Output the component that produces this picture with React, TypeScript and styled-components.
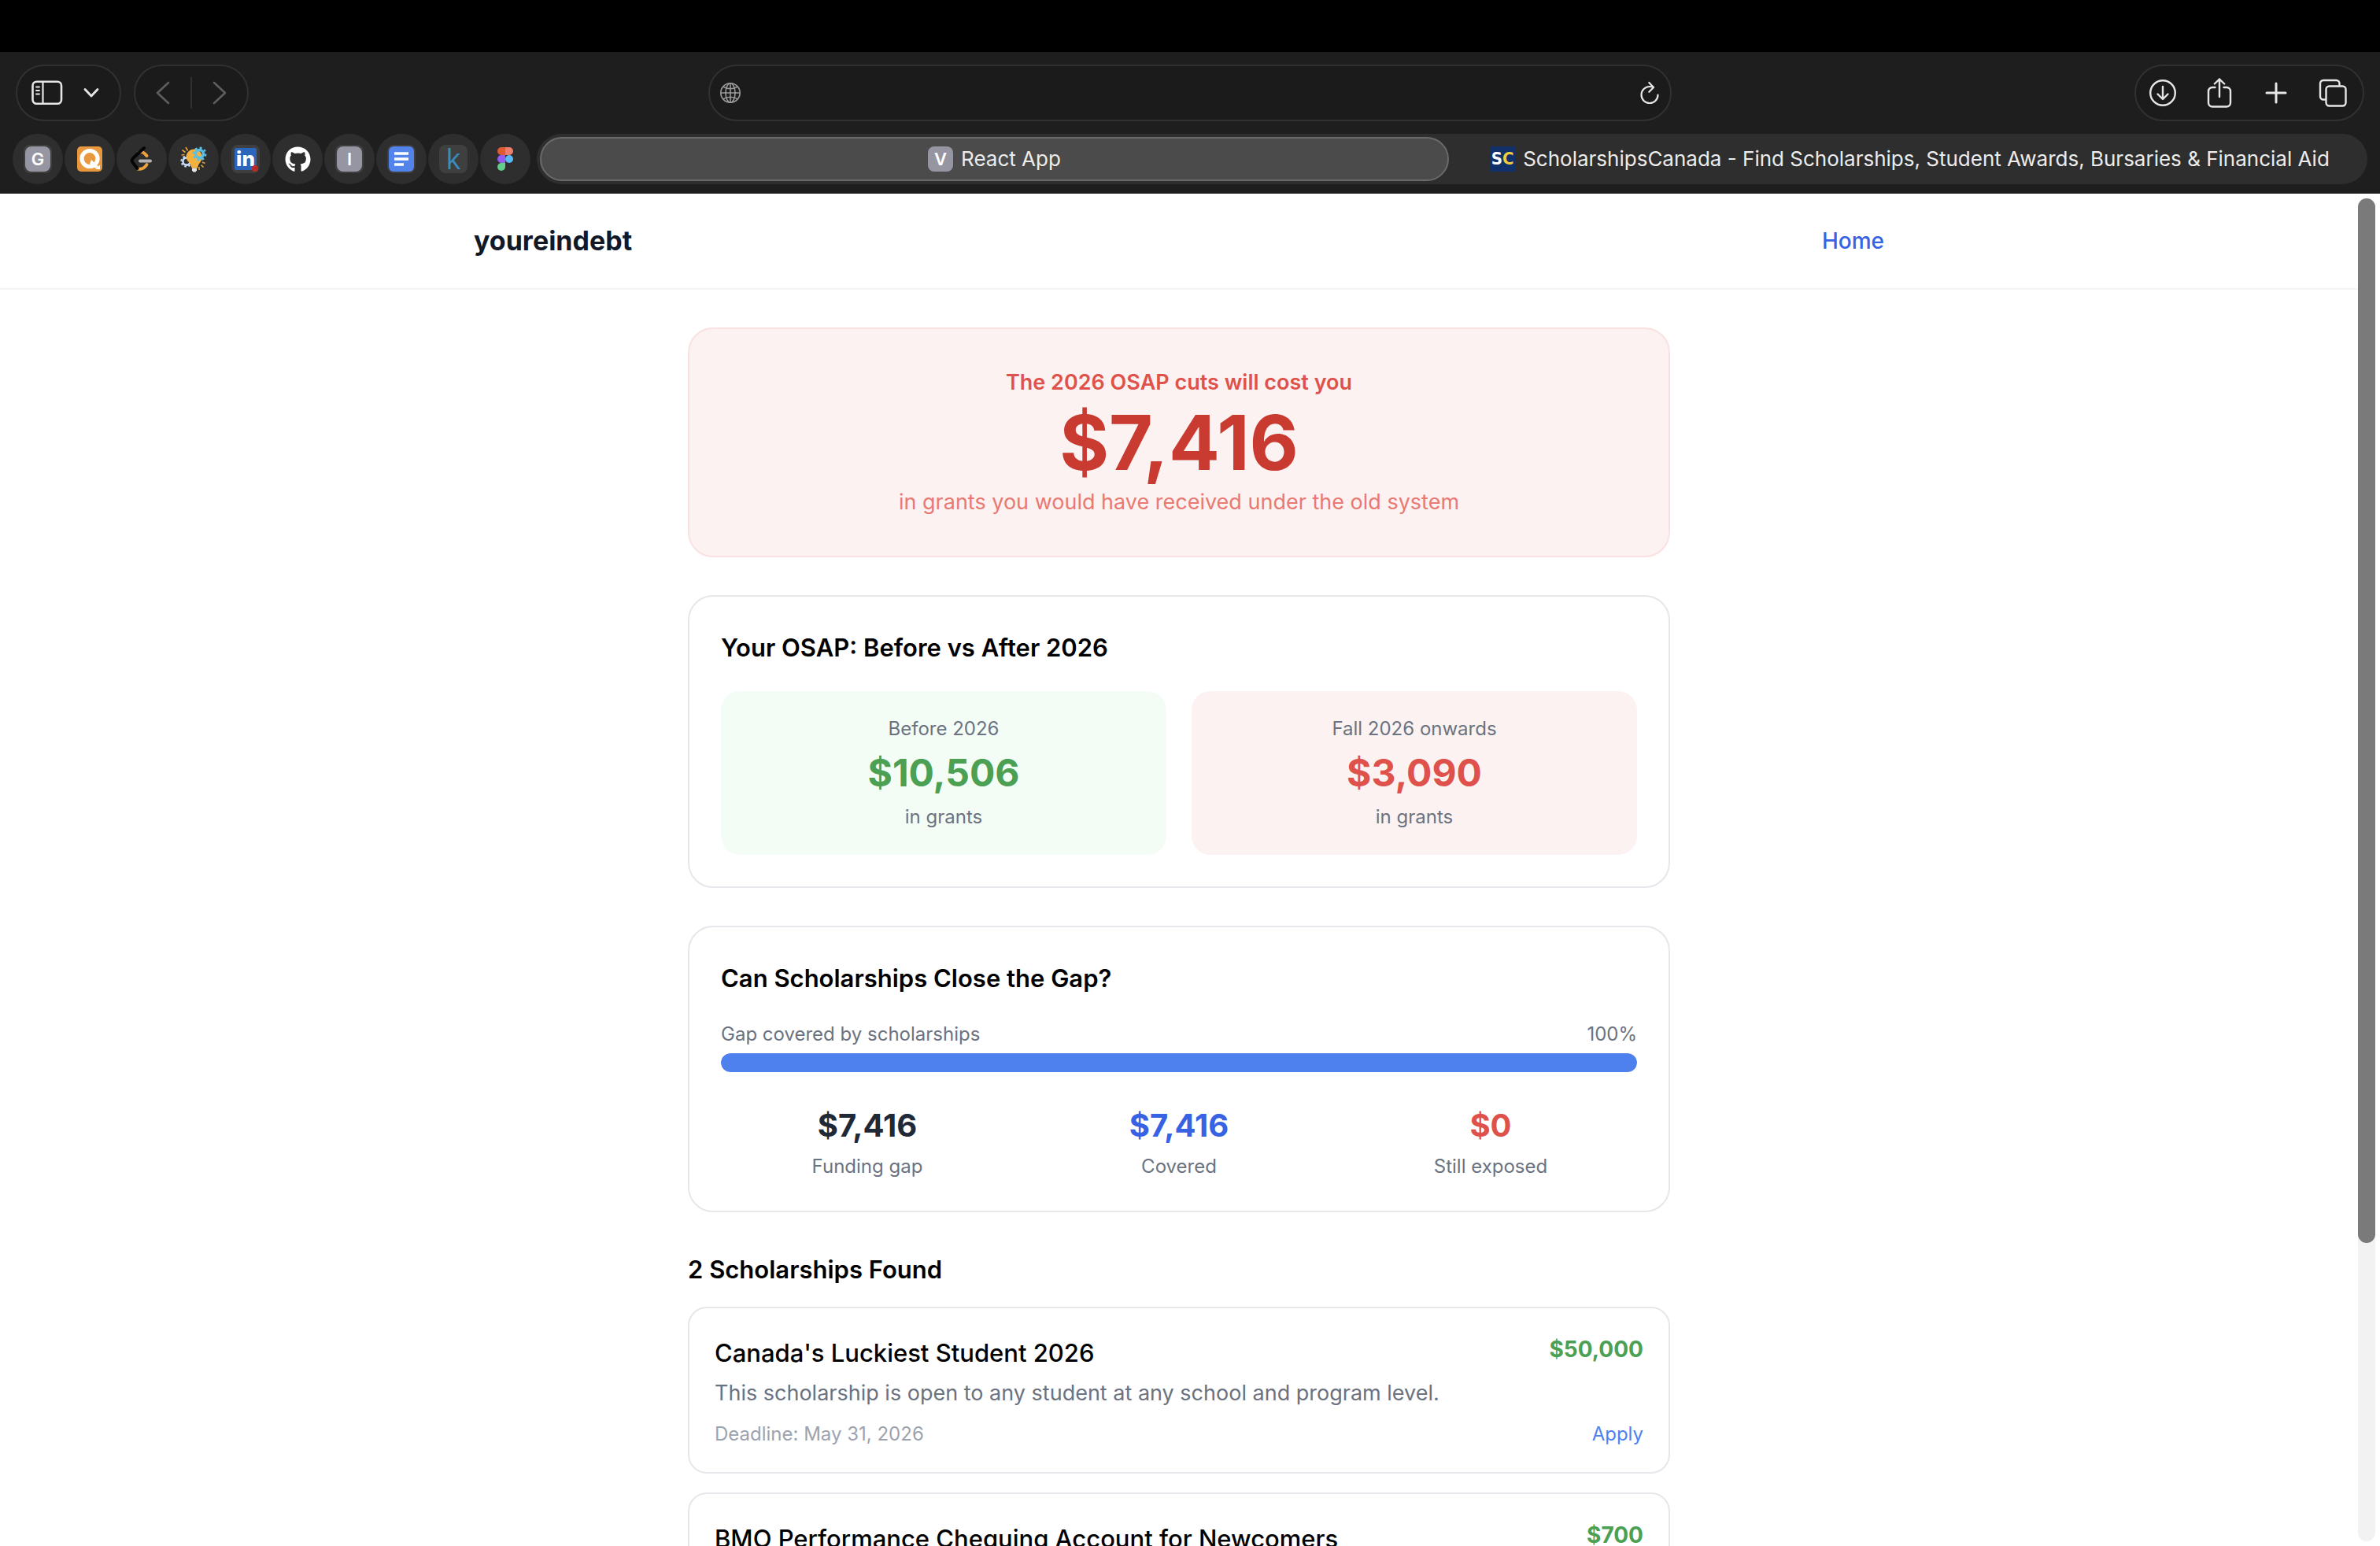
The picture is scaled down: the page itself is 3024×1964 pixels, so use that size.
import React from "react";
import styled, { createGlobalStyle } from "styled-components";
import { FaGithub } from "react-icons/fa";

const GlobalStyle = createGlobalStyle`
  *, *::before, *::after { box-sizing: border-box; }
  body {
    margin: 0;
    font-family: Inter, "Liberation Sans", sans-serif;
    color: #000;
    background: #fff;
  }
  h1, h2, h3, p, dl, dd, dt, ul { margin: 0; padding: 0; }
  button { font: inherit; color: inherit; border: 0; background: none; padding: 0; }
  a { text-decoration: none; }
`;

const color = {
  ink: "#111827",
  slate: "#1f2937",
  gray: "#6b7280",
  mute: "#9ca3af",
  line: "#e5e7eb",
  blue: "#3662e3",
  sky: "#4f81ee",
  green: "#4ba054",
  red: "#df524c",
  deepRed: "#c93a31",
  softRed: "#e87973",
  redTint: "#fcf2f1",
  redLine: "#fae1e1",
  greenTint: "#f3fdf6",
};

/* ---------- browser window ---------- */

const Window = styled.div`
  display: flex;
  flex-direction: column;
  height: 100vh;
  overflow: hidden;
`;

const MenuStrip = styled.div`
  flex: none;
  height: 66px;
  background: #000;
`;

const Chrome = styled.header`
  flex: none;
  display: flex;
  flex-direction: column;
  gap: 16px;
  padding: 16px 16px 12px;
  background: #1e1e1e;
  color: #e6e6e6;
`;

const Toolbar = styled.div`
  display: grid;
  grid-template-columns: 1fr minmax(0, 1224px) 1fr;
  align-items: center;
  padding: 0 4px;
`;

const ToolGroup = styled.div<{ $end?: boolean }>`
  display: flex;
  gap: 16px;
  justify-content: ${(p) => (p.$end ? "flex-end" : "flex-start")};
`;

const Pill = styled.div<{ $width?: number; $pad?: number }>`
  display: flex;
  align-items: center;
  justify-content: space-between;
  height: 72px;
  ${(p) => (p.$width ? `width: ${p.$width}px;` : "")}
  padding: 0 ${(p) => p.$pad ?? 16}px;
  border: 2px solid #313131;
  border-radius: 36px;
  background: #1b1b1b;
`;

const ActionPill = styled(Pill)`
  justify-content: flex-start;
  gap: 36px;
`;

const IconButton = styled.button<{ $width?: number; $dim?: boolean }>`
  display: flex;
  align-items: center;
  justify-content: center;
  width: ${(p) => p.$width ?? 36}px;
  height: 44px;
  color: ${(p) => (p.$dim ? "#5e5e5e" : "#e6e6e6")};
`;

const PillDivider = styled.span`
  width: 2px;
  height: 40px;
  background: #303030;
`;

const Address = styled.input`
  flex: 1;
  min-width: 0;
  height: 44px;
  padding: 0 16px;
  border: 0;
  outline: 0;
  background: transparent;
  color: inherit;
  font: inherit;
  font-size: 26px;
`;

const TabRow = styled.nav`
  display: flex;
  gap: 8px;
`;

const PinnedTabs = styled.div`
  display: flex;
  gap: 2px;
`;

const PinnedTab = styled.button`
  display: flex;
  align-items: center;
  justify-content: center;
  width: 64px;
  height: 64px;
  border-radius: 32px;
  background: #2e2e2e;
`;

const TabStrip = styled.div`
  flex: 1;
  display: grid;
  grid-template-columns: 1fr 1fr;
  gap: 8px;
  padding: 4px;
  border-radius: 32px;
  background: #2e2e2e;
`;

const Tab = styled.button<{ $active?: boolean }>`
  display: flex;
  align-items: center;
  justify-content: center;
  gap: 10px;
  height: 56px;
  border: 2px solid ${(p) => (p.$active ? "#6a6a6a" : "transparent")};
  border-radius: 28px;
  background: ${(p) => (p.$active ? "#4b4b4b" : "transparent")};
  color: #ececec;
  font-size: 26px;
  line-height: 32px;
  white-space: nowrap;
`;

const Plate = styled.span<{ $plain?: boolean }>`
  display: flex;
  align-items: center;
  justify-content: center;
  width: 36px;
  height: 36px;
  border-radius: 8px;
  background: ${(p) => (p.$plain ? "transparent" : "#3f3f3f")};
`;

const Letter = styled.span`
  display: flex;
  align-items: center;
  justify-content: center;
  width: 32px;
  height: 32px;
  border-radius: 8px;
  background: #9696a2;
  color: #fff;
  font-size: 22px;
  font-weight: 600;
  line-height: 32px;
`;

const LinkedInMark = styled.span`
  position: relative;
  display: flex;
  align-items: center;
  justify-content: center;
  width: 28px;
  height: 28px;
  border-radius: 2px;
  background: #2b66bd;
  color: #fff;
  font-size: 26px;
  font-weight: 800;
  line-height: 28px;

  &::after {
    content: "";
    position: absolute;
    right: -2px;
    bottom: -2px;
    width: 8px;
    height: 8px;
    border-radius: 4px;
    background: #bd2a25;
  }
`;

const KaggleMark = styled.span`
  color: #3a8bbf;
  font-family: "Open Sans", sans-serif;
  font-size: 36px;
  line-height: 36px;
`;

const CrestMark = styled.span`
  display: flex;
  align-items: center;
  justify-content: center;
  width: 32px;
  height: 32px;
  background: #12306a;
  color: #fff;
  font-family: "DejaVu Sans Condensed", "Liberation Sans Narrow", "Liberation Sans", sans-serif;
  font-size: 22px;
  font-weight: 700;
  line-height: 32px;

  b {
    color: #f2cc36;
    font-weight: inherit;
  }
`;

/* ---------- page ---------- */

const Viewport = styled.div`
  flex: 1;
  min-height: 0;
  display: flex;
`;

const Page = styled.div`
  flex: 1;
  min-width: 0;
  overflow: hidden;
`;

const ScrollGutter = styled.div`
  flex: none;
  display: flex;
  width: 28px;
  padding: 6px 6px 6px 0;
`;

const ScrollTrack = styled.div`
  flex: 1;
  display: grid;
  grid-template-rows: 7fr 2fr;
  border-radius: 11px;
  background: #f2f2f2;
`;

const ScrollThumb = styled.div`
  border-radius: 11px;
  background: #7a7a7a;
`;

const SiteHeader = styled.div`
  border-bottom: 2px solid #f3f4f6;
`;

const SiteBar = styled.div`
  display: flex;
  align-items: center;
  justify-content: space-between;
  max-width: 1792px;
  margin: 0 auto;
  padding: 36px 0;
`;

const Brand = styled.span`
  color: ${color.ink};
  font-size: 34px;
  font-weight: 700;
  line-height: 48px;
`;

const HomeLink = styled.a`
  color: ${color.blue};
  font-size: 28px;
  font-weight: 500;
  line-height: 40px;
`;

const Main = styled.main`
  display: flex;
  flex-direction: column;
  gap: 48px;
  max-width: 1248px;
  margin: 0 auto;
  padding: 48px 0;
`;

const Hero = styled.section`
  padding: 48px;
  border: 2px solid ${color.redLine};
  border-radius: 32px;
  background: ${color.redTint};
  text-align: center;
`;

const HeroLead = styled.p`
  color: ${color.red};
  font-size: 27px;
  font-weight: 600;
  line-height: 40px;
`;

const HeroFigure = styled.p`
  padding: 8px 0;
  color: ${color.deepRed};
  font-size: 96px;
  font-weight: 700;
  line-height: 96px;
`;

const HeroNote = styled.p`
  color: ${color.softRed};
  font-size: 27px;
  line-height: 40px;
`;

const Card = styled.section`
  padding: 40px;
  border: 2px solid ${color.line};
  border-radius: 32px;
  background: #fff;
`;

const Heading = styled.h2`
  font-size: 31px;
  font-weight: 600;
  line-height: 50px;
`;

const Panels = styled.div`
  display: grid;
  grid-template-columns: 1fr 1fr;
  gap: 32px;
  margin-top: 30px;
`;

const Panel = styled.div<{ $tint: string }>`
  padding: 32px;
  border-radius: 24px;
  background: ${(p) => p.$tint};
  text-align: center;
`;

const Caption = styled.p`
  color: ${color.gray};
  font-size: 24px;
  line-height: 32px;
`;

const PanelFigure = styled.p<{ $color: string }>`
  padding: 8px 0;
  color: ${(p) => p.$color};
  font-size: 48px;
  font-weight: 700;
  line-height: 64px;
`;

const MeterLabels = styled.div`
  display: flex;
  justify-content: space-between;
  margin-top: 30px;
`;

const Meter = styled.div`
  height: 24px;
  margin-top: 8px;
  border-radius: 12px;
  background: ${color.line};
  overflow: hidden;
`;

const MeterFill = styled.div`
  height: 100%;
  border-radius: 12px;
  background: ${color.sky};
`;

const Stats = styled.div`
  display: grid;
  grid-template-columns: repeat(3, 1fr);
  gap: 24px;
  margin-top: 40px;
  text-align: center;
`;

const StatFigure = styled.p<{ $color: string }>`
  margin-bottom: 8px;
  color: ${(p) => p.$color};
  font-size: 40px;
  font-weight: 700;
  line-height: 56px;
`;

const Listing = styled.section`
  display: flex;
  flex-direction: column;
  gap: 22px;
`;

const Awards = styled.div`
  display: flex;
  flex-direction: column;
  gap: 24px;
`;

const Award = styled.article`
  padding: 32px;
  border: 2px solid ${color.line};
  border-radius: 24px;
  background: #fff;
`;

const Row = styled.div<{ $gap?: number }>`
  display: flex;
  align-items: flex-start;
  justify-content: space-between;
  margin-top: ${(p) => p.$gap ?? 0}px;
`;

const AwardTitle = styled.h3`
  font-size: 31px;
  font-weight: 500;
  line-height: 50px;
`;

const Amount = styled.span`
  color: ${color.green};
  font-size: 28px;
  font-weight: 700;
  line-height: 40px;
`;

const Summary = styled.p`
  margin-top: 6px;
  color: ${color.gray};
  font-size: 27px;
  line-height: 40px;
`;

const Deadline = styled.span`
  color: ${color.mute};
  font-size: 24px;
  line-height: 32px;
`;

const ApplyLink = styled.a`
  color: ${color.sky};
  font-size: 24px;
  line-height: 32px;
`;

/* ---------- drawings ---------- */

const stroke = {
  fill: "none",
  stroke: "currentColor",
  strokeLinecap: "round" as const,
  strokeLinejoin: "round" as const,
};

const SidebarIcon = () => (
  <svg width="40" height="32" viewBox="0 0 40 32" {...stroke} strokeWidth="2.6">
    <rect x="1.5" y="1.8" width="36.5" height="28" rx="5" />
    <path d="M14.5 2v28" strokeWidth="2.2" />
    <path d="M6 8.5h4M6 13h4M6 17.5h4" strokeWidth="1.8" />
  </svg>
);

const ChevronDown = () => (
  <svg width="20" height="14" viewBox="0 0 20 14" {...stroke} strokeWidth="2.8">
    <path d="M2 2.5l8 8.5 8-8.5" />
  </svg>
);

const ChevronSide = ({ right }: { right?: boolean }) => (
  <svg width="18" height="30" viewBox="0 0 18 30" {...stroke} strokeWidth="2.6">
    <path d={right ? "M2 2l14 13L2 28" : "M16 2L2 15l14 13"} />
  </svg>
);

const GlobeIcon = () => (
  <svg width="28" height="28" viewBox="0 0 28 28" fill="none" stroke="#9a9a9a" strokeWidth="1.6">
    <circle cx="14" cy="14" r="12.2" />
    <ellipse cx="14" cy="14" rx="6" ry="12.2" />
    <path d="M14 1.8v24.4M1.8 14h24.4M4.8 6.2c5 3.4 13.4 3.4 18.4 0M4.8 21.8c5-3.4 13.4-3.4 18.4 0" />
  </svg>
);

const ReloadIcon = () => (
  <svg width="26" height="30" viewBox="0 0 26 30" {...stroke} strokeWidth="2.2">
    <path d="M23.5 17.5a10.500 10.500 0 1 1-10.500-10.500c2 0 3.600.3 4.800.8" />
    <path d="M12.300 2l5.700 6-5.700 5.800" />
  </svg>
);

const DownloadIcon = () => (
  <svg width="36" height="36" viewBox="0 0 36 36" {...stroke} strokeWidth="2.4">
    <circle cx="18" cy="18" r="15.8" />
    <path d="M18 10v15.500M11.500 19.500l6.500 6.500 6.500-6.500" />
  </svg>
);

const ShareIcon = () => (
  <svg width="32" height="40" viewBox="0 0 32 40" {...stroke} strokeWidth="2.4">
    <path d="M10.500 13H7a5 5 0 0 0-5 5v14.500a5 5 0 0 0 5 5h18a5 5 0 0 0 5-5V18a5 5 0 0 0-5-5h-3.500" />
    <path d="M16 25V2.500M9.800 8.500L16 2.500l6.200 6" />
  </svg>
);

const PlusIcon = () => (
  <svg width="28" height="28" viewBox="0 0 28 28" {...stroke} strokeWidth="3">
    <path d="M14 2v24M2 14h24" />
  </svg>
);

const TabsIcon = () => (
  <svg width="36" height="36" viewBox="0 0 36 36" {...stroke} strokeWidth="2.4">
    <rect x="9.5" y="9.5" width="25" height="25" rx="4" />
    <path d="M8.500 26.500H6a4 4 0 0 1-4-4V6a4 4 0 0 1 4-4h16.500a4 4 0 0 1 4 4v2" />
  </svg>
);

const QIcon = () => (
  <svg width="32" height="32" viewBox="0 0 32 32">
    <rect width="32" height="32" rx="5" fill="#e9983e" />
    <circle cx="16" cy="15.5" r="10" fill="none" stroke="#fff" strokeWidth="5.2" />
    <path d="M18 17l9 8.500-3 2.500-8-6z" fill="#fff" />
    <path d="M29 23.500v5.500h-5.500z" fill="#fff" />
  </svg>
);

const BracketIcon = () => (
  <svg width="32" height="34" viewBox="0 0 32 34" fill="none" strokeLinecap="round" strokeWidth="4">
    <path d="M12.500 8.500c4-1.500 6.500 0 10 4.500" stroke="#eda23c" />
    <path d="M22.500 24c-3.500 5.500-7.500 6.500-11.500 5.500" stroke="#eda23c" />
    <path d="M19 3L5.500 15.500c-2.500 2.500-2.500 4.500 0 7l5 6.500" stroke="#060606" />
    <path d="M14 19.500h13" stroke="#b5b3b1" />
  </svg>
);

const BulbIcon = () => (
  <svg width="34" height="34" viewBox="0 0 34 34" fill="none">
    <circle cx="8" cy="20" r="4.6" stroke="#c9dcfa" strokeWidth="2.6" />
    <circle cx="8" cy="20" r="6.6" stroke="#c9dcfa" strokeWidth="2" strokeDasharray="2.6 2.6" />
    <path d="M17.500 4.500c6 0 10.500 4.500 10.500 10 0 4.500-3.500 7-5 10.500l-1 3.500h-7.500l-1-3.500c-1.500-4-6-6-6-10.500 0-5.500 4.500-10 10-10z" fill="#f3b23f" />
    <path d="M15 28.500h6v3l-1.500 2h-3l-1.500-2z" fill="#e4e4e4" />
    <circle cx="24.5" cy="10.5" r="5" stroke="#58bfe6" strokeWidth="3.4" />
    <circle cx="24.5" cy="10.5" r="7.8" stroke="#58bfe6" strokeWidth="2.4" strokeDasharray="3 3.1" />
    <path d="M7 2l2.500 4.500M2.500 5.500l4 3M1.500 12l4-.5M28 21l3.500 1.500M26.500 24.500l3 3M24 27v4" stroke="#e2a23f" strokeWidth="1.6" />
  </svg>
);

const DocsIcon = () => (
  <svg width="32" height="32" viewBox="0 0 32 32">
    <rect width="32" height="32" rx="6" fill="#5384ec" />
    <path d="M7 9h18M7 16h18M7 23h12" stroke="#fff" strokeWidth="3.4" />
  </svg>
);

const FigmaIcon = () => (
  <svg width="20" height="30" viewBox="0 0 20 30">
    <path d="M5 0h5v10H5A5 5 0 0 1 5 0z" fill="#e05a33" />
    <path d="M10 0h5a5 5 0 0 1 0 10h-5z" fill="#ee7e6c" />
    <path d="M5 10h5v10H5a5 5 0 0 1 0-10z" fill="#975cf6" />
    <circle cx="15" cy="15" r="5" fill="#5bb9f8" />
    <path d="M5 20h5v5a5 5 0 1 1-5-5z" fill="#63cd8a" />
  </svg>
);

/* ---------- data ---------- */

const pinned: { name: string; icon: React.ReactNode; plain?: boolean }[] = [
  { name: "G", icon: <Letter>G</Letter> },
  { name: "Q", icon: <QIcon />, plain: true },
  { name: "LeetCode", icon: <BracketIcon />, plain: true },
  { name: "Ideas", icon: <BulbIcon />, plain: true },
  { name: "LinkedIn", icon: <LinkedInMark>in</LinkedInMark> },
  { name: "GitHub", icon: <FaGithub size={33} color="#fff" />, plain: true },
  { name: "I", icon: <Letter>I</Letter> },
  { name: "Docs", icon: <DocsIcon /> },
  { name: "Kaggle", icon: <KaggleMark>k</KaggleMark> },
  { name: "Figma", icon: <FigmaIcon />, plain: true },
];

const stats = [
  { value: "$7,416", label: "Funding gap", tone: color.slate },
  { value: "$7,416", label: "Covered", tone: color.blue },
  { value: "$0", label: "Still exposed", tone: color.red },
];

const awards = [
  {
    title: "Canada's Luckiest Student 2026",
    amount: "$50,000",
    summary: "This scholarship is open to any student at any school and program level.",
    deadline: "Deadline: May 31, 2026",
  },
  { title: "BMO Performance Chequing Account for Newcomers", amount: "$700" },
];

const covered = 100;

export default function App() {
  return (
    <Window>
      <GlobalStyle />
      <MenuStrip />
      <Chrome>
        <Toolbar>
          <ToolGroup>
            <Pill $width={134} $pad={18}>
              <IconButton $width={40} aria-label="Sidebar"><SidebarIcon /></IconButton>
              <IconButton $width={36} aria-label="Tab groups"><ChevronDown /></IconButton>
            </Pill>
            <Pill $width={146} $pad={8}>
              <IconButton $width={54} $dim aria-label="Back"><ChevronSide /></IconButton>
              <PillDivider />
              <IconButton $width={54} $dim aria-label="Forward"><ChevronSide right /></IconButton>
            </Pill>
          </ToolGroup>
          <Pill $pad={12}>
            <GlobeIcon />
            <Address type="text" aria-label="Address" />
            <IconButton $width={28} aria-label="Reload"><ReloadIcon /></IconButton>
          </Pill>
          <ToolGroup $end>
            <ActionPill $width={292} $pad={16}>
              <IconButton aria-label="Downloads"><DownloadIcon /></IconButton>
              <IconButton aria-label="Share"><ShareIcon /></IconButton>
              <IconButton aria-label="New tab"><PlusIcon /></IconButton>
              <IconButton aria-label="All tabs"><TabsIcon /></IconButton>
            </ActionPill>
          </ToolGroup>
        </Toolbar>
        <TabRow>
          <PinnedTabs>
            {pinned.map((tab) => (
              <PinnedTab key={tab.name} aria-label={tab.name}>
                <Plate $plain={tab.plain}>{tab.icon}</Plate>
              </PinnedTab>
            ))}
          </PinnedTabs>
          <TabStrip>
            <Tab $active>
              <Letter>V</Letter>
              React App
            </Tab>
            <Tab>
              <CrestMark>S<b>C</b></CrestMark>
              ScholarshipsCanada - Find Scholarships, Student Awards, Bursaries &amp; Financial Aid
            </Tab>
          </TabStrip>
        </TabRow>
      </Chrome>
      <Viewport>
        <Page>
          <SiteHeader>
            <SiteBar>
              <Brand>youreindebt</Brand>
              <HomeLink href="#home">Home</HomeLink>
            </SiteBar>
          </SiteHeader>
          <Main>
            <Hero>
              <HeroLead>The 2026 OSAP cuts will cost you</HeroLead>
              <HeroFigure>$7,416</HeroFigure>
              <HeroNote>in grants you would have received under the old system</HeroNote>
            </Hero>
            <Card>
              <Heading>Your OSAP: Before vs After 2026</Heading>
              <Panels>
                <Panel $tint={color.greenTint}>
                  <Caption>Before 2026</Caption>
                  <PanelFigure $color={color.green}>$10,506</PanelFigure>
                  <Caption>in grants</Caption>
                </Panel>
                <Panel $tint={color.redTint}>
                  <Caption>Fall 2026 onwards</Caption>
                  <PanelFigure $color={color.red}>$3,090</PanelFigure>
                  <Caption>in grants</Caption>
                </Panel>
              </Panels>
            </Card>
            <Card>
              <Heading>Can Scholarships Close the Gap?</Heading>
              <MeterLabels>
                <Caption>Gap covered by scholarships</Caption>
                <Caption>{covered}%</Caption>
              </MeterLabels>
              <Meter role="progressbar" aria-valuenow={covered} aria-label="Gap covered by scholarships">
                <MeterFill style={{ width: `${covered}%` }} />
              </Meter>
              <Stats>
                {stats.map((s) => (
                  <div key={s.label}>
                    <StatFigure $color={s.tone}>{s.value}</StatFigure>
                    <Caption>{s.label}</Caption>
                  </div>
                ))}
              </Stats>
            </Card>
            <Listing>
              <Heading>{awards.length} Scholarships Found</Heading>
              <Awards>
                {awards.map((a) => (
                  <Award key={a.title}>
                    <Row>
                      <AwardTitle>{a.title}</AwardTitle>
                      <Amount>{a.amount}</Amount>
                    </Row>
                    {a.summary && <Summary>{a.summary}</Summary>}
                    {a.deadline && (
                      <Row $gap={16}>
                        <Deadline>{a.deadline}</Deadline>
                        <ApplyLink href="#apply">Apply</ApplyLink>
                      </Row>
                    )}
                  </Award>
                ))}
              </Awards>
            </Listing>
          </Main>
        </Page>
        <ScrollGutter>
          <ScrollTrack>
            <ScrollThumb />
          </ScrollTrack>
        </ScrollGutter>
      </Viewport>
    </Window>
  );
}
